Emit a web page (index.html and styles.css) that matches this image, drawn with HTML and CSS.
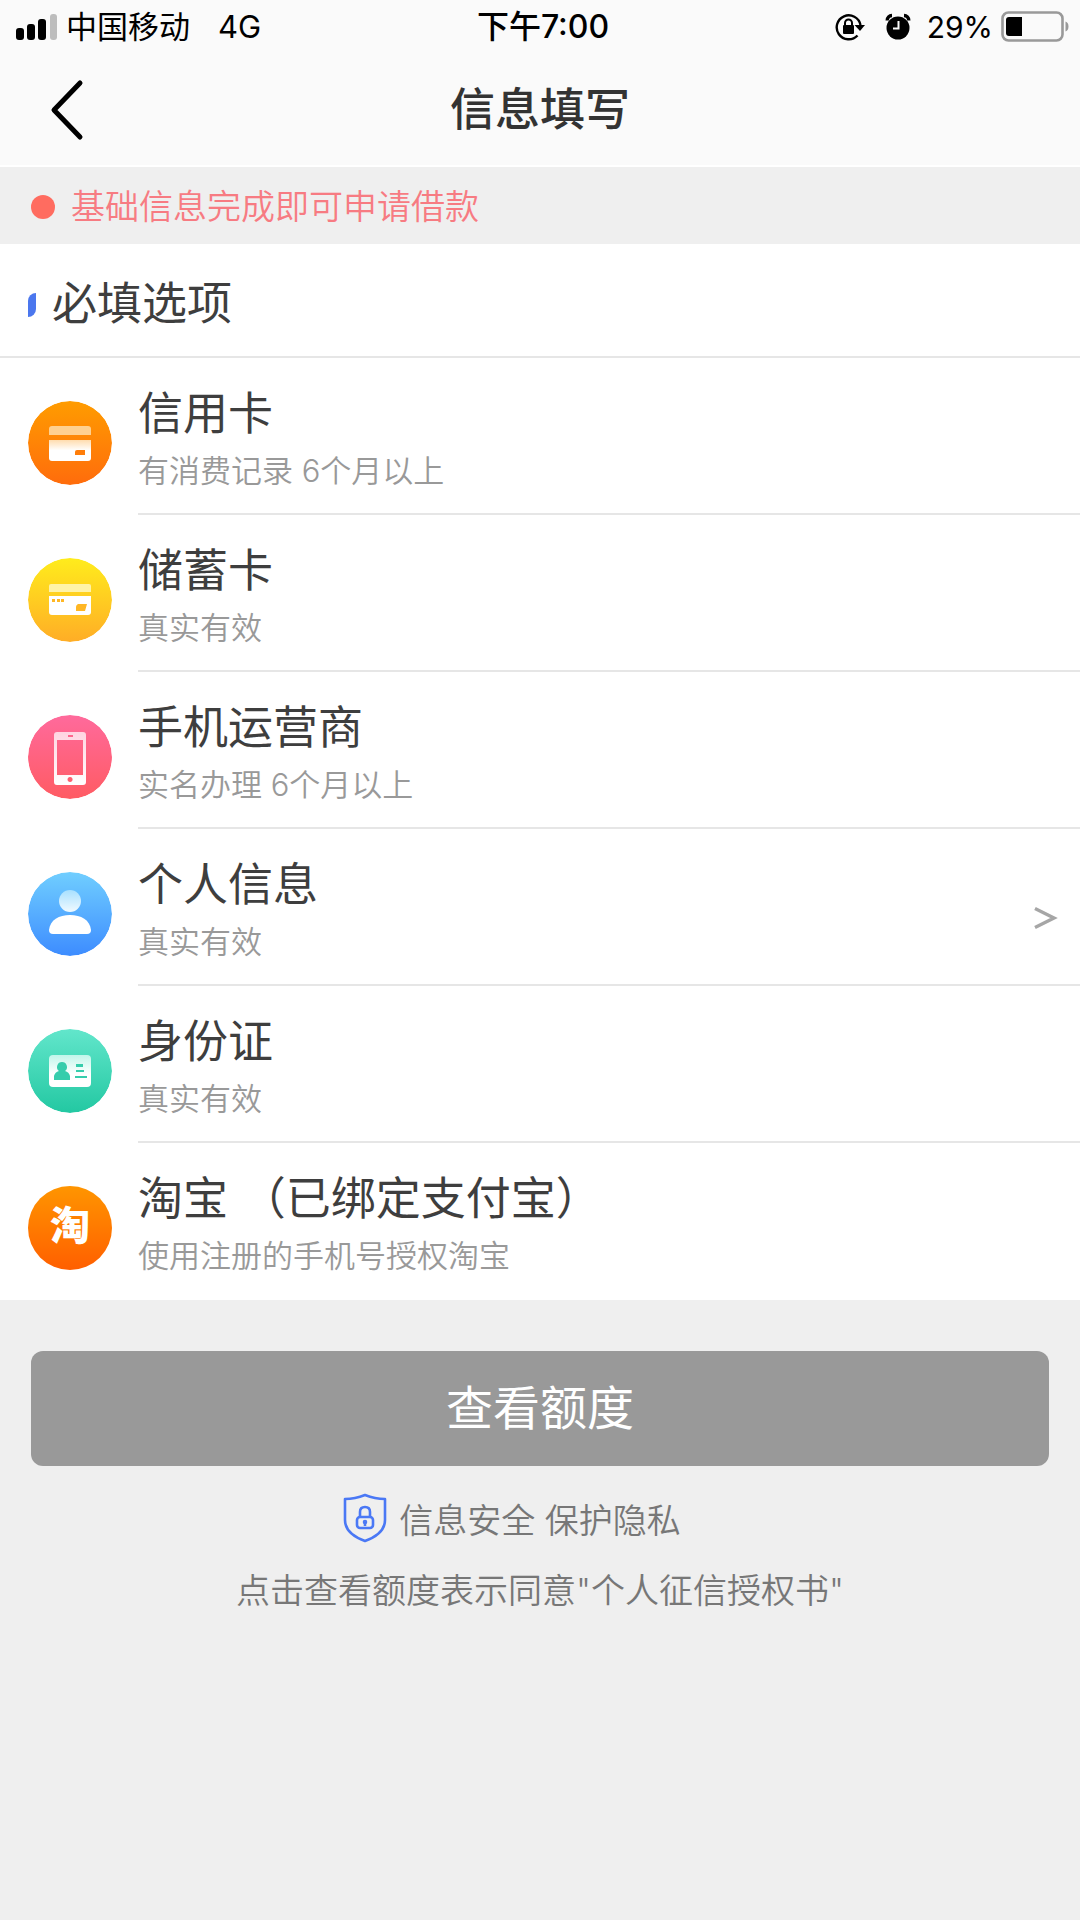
FILE: index.html
```html
<!DOCTYPE html>
<html lang="zh-CN">
<head>
<meta charset="utf-8">
<meta name="viewport" content="width=device-width">
<title>信息填写</title>
<link rel="stylesheet" href="styles.css">
</head>
<body>
<div class="status">
  <div class="status-side">
    <svg class="signal" width="42" height="28" viewBox="0 0 42 28" aria-hidden="true">
      <rect x="0" y="15" width="8" height="12" rx="3"/>
      <rect x="11" y="11" width="8" height="16" rx="3"/>
      <rect x="22" y="6" width="8" height="21" rx="3"/>
      <rect x="34" y="1" width="7" height="26" rx="3" fill="#bdbdbd"/>
    </svg>
    <span class="carrier">中国移动</span>
    <span>4G</span>
  </div>
  <div class="status-time">下午7:00</div>
  <div class="status-side status-right">
    <svg width="30" height="28" viewBox="0 0 30 28" aria-hidden="true">
      <path d="M22.500 22.500A12 12 0 1 1 25.500 12" fill="none" stroke="#000" stroke-width="2.400"/>
      <path d="M19.500 12h10.500l-5 6z"/>
      <rect x="8" y="12" width="11" height="9" rx="1"/>
      <path d="M10 12.500V10a3.500 3.500 0 0 1 7 0v2.500" fill="none" stroke="#000" stroke-width="2"/>
    </svg>
    <svg class="alarm" width="26" height="28" viewBox="0 0 26 28" aria-hidden="true">
      <circle cx="13" cy="15" r="11.500"/>
      <path d="M2.200 7.500A5 5 0 0 1 7 2.500M19 2.500a5 5 0 0 1 4.800 5" fill="none" stroke="#000" stroke-width="3.400"/>
      <path d="M13.500 8v7.500H8" fill="none" stroke="#fafafa" stroke-width="2"/>
    </svg>
    <span class="percent">29%</span>
    <svg width="69" height="32" viewBox="0 0 69 32" aria-hidden="true">
      <rect x="1.500" y="1.500" width="60" height="28" rx="6" fill="none" stroke="#999" stroke-width="2.600"/>
      <path d="M64.500 10.500c4 1 4 9 0 10z" fill="#999"/>
      <path d="M8 6h13v19H8a3 3 0 0 1-3-3V9a3 3 0 0 1 3-3z"/>
    </svg>
  </div>
</div>

<header class="nav">
  <button class="back" type="button" aria-label="返回">
    <svg width="34" height="62" viewBox="0 0 34 62" aria-hidden="true"><path d="M30 4L4 31l26 27" fill="none" stroke="#000" stroke-width="5" stroke-linecap="round" stroke-linejoin="round"/></svg>
  </button>
  <h1 class="nav-title">信息填写</h1>
</header>

<p class="notice"><span class="dot"></span>基础信息完成即可申请借款</p>

<main>
  <section class="panel">
    <h2 class="section-title"><span class="mark"></span>必填选项</h2>
    <ul class="list">
      <li><a class="row" href="#credit">
        <svg class="badge" viewBox="0 0 84 84" aria-hidden="true">
          <defs>
            <linearGradient id="g1" x2="0" y2="1"><stop stop-color="#ff9c00"/><stop offset="1" stop-color="#ff6c0c"/></linearGradient>
            <linearGradient id="c1" x2="0" y2="1"><stop stop-color="#ffdcae"/><stop offset=".5" stop-color="#fff"/></linearGradient>
          </defs>
          <circle cx="42" cy="42" r="42" fill="url(#g1)"/>
          <path d="M24 25h36q3 0 3 3v6H21v-6q0-3 3-3z" fill="#ffd08f"/>
          <path d="M21 39h42v18q0 3-3 3H24q-3 0-3-3z" fill="url(#c1)"/>
          <path d="M49 49h8v5h-10v-3q0-2 2-2z" fill="#ff7d08"/>
        </svg>
        <span class="text"><span class="name">信用卡</span><span class="desc">有消费记录 6个月以上</span></span>
      </a></li>
      <li><a class="row" href="#debit">
        <svg class="badge" viewBox="0 0 84 84" aria-hidden="true">
          <defs><linearGradient id="g2" x2="0" y2="1"><stop stop-color="#ffec1c"/><stop offset="1" stop-color="#ffad26"/></linearGradient></defs>
          <circle cx="42" cy="42" r="42" fill="url(#g2)"/>
          <path d="M23 26h38q2 0 2 2v6H21v-6q0-2 2-2z" fill="#fff3a8"/>
          <path d="M21 38h42v16q0 3-3 3H24q-3 0-3-3z" fill="#fff"/>
          <path d="M24 41h3v3h-3zm5 0h3v3h-3zm4 0h3v3h-3zM50 46h9l-2 7h-9v-4q0-2 2-3z" fill="#ffb724"/>
        </svg>
        <span class="text"><span class="name">储蓄卡</span><span class="desc">真实有效</span></span>
      </a></li>
      <li><a class="row" href="#carrier">
        <svg class="badge" viewBox="0 0 84 84" aria-hidden="true">
          <defs>
            <linearGradient id="g3" x2="0" y2="1"><stop stop-color="#ff6a9c"/><stop offset="1" stop-color="#ff5b63"/></linearGradient>
            <linearGradient id="c3" x2="0" y2="1"><stop stop-color="#ffd4e1"/><stop offset="1" stop-color="#fff"/></linearGradient>
          </defs>
          <circle cx="42" cy="42" r="42" fill="url(#g3)"/>
          <path fill-rule="evenodd" d="M29 17h26q3 0 3 3v47q0 3-3 3H29q-3 0-3-3V20q0-3 3-3zM29 25v35h26V25zM40 20v2h5v-2zM42 62a2.500 2.500 0 1 0 .1 0z" fill="url(#c3)"/>
        </svg>
        <span class="text"><span class="name">手机运营商</span><span class="desc">实名办理 6个月以上</span></span>
      </a></li>
      <li><a class="row" href="#profile">
        <svg class="badge" viewBox="0 0 84 84" aria-hidden="true">
          <defs>
            <linearGradient id="g4" x2="0" y2="1"><stop stop-color="#70ceff"/><stop offset="1" stop-color="#3d8cff"/></linearGradient>
            <linearGradient id="c4" x2="0" y2="1"><stop stop-color="#a8e0ff"/><stop offset="1" stop-color="#f0faff"/></linearGradient>
          </defs>
          <circle cx="42" cy="42" r="42" fill="url(#g4)"/>
          <circle cx="42" cy="29" r="11" fill="url(#c4)"/>
          <path d="M21 58c1-10 10-15 21-15s20 5 21 15q0 4-4 4H25q-4 0-4-4z" fill="#fff"/>
        </svg>
        <span class="text"><span class="name">个人信息</span><span class="desc">真实有效</span></span>
        <svg class="more" width="24" height="26" viewBox="0 0 24 26" aria-hidden="true"><path d="M1 3.500L20 13 1 22.500" fill="none" stroke="#a6a6a6" stroke-width="3.400"/></svg>
      </a></li>
      <li><a class="row" href="#idcard">
        <svg class="badge" viewBox="0 0 84 84" aria-hidden="true">
          <defs>
            <linearGradient id="g5" x2="0" y2="1"><stop stop-color="#62e6cb"/><stop offset="1" stop-color="#23c8a2"/></linearGradient>
            <linearGradient id="c5" x2="0" y2="1"><stop stop-color="#c0f6ea"/><stop offset=".6" stop-color="#fff"/></linearGradient>
          </defs>
          <circle cx="42" cy="42" r="42" fill="url(#g5)"/>
          <rect x="21" y="26" width="42" height="32" rx="4" fill="url(#c5)"/>
          <path d="M34 33a5 5 0 0 1 3 9q4 1 5 5v4H26v-4q1-4 5-5a5 5 0 0 1 3-9zM48 35h7v3h-7zm0 6h8v2h-8zm-1 6h12v2H47z" fill="#36cdac"/>
        </svg>
        <span class="text"><span class="name">身份证</span><span class="desc">真实有效</span></span>
      </a></li>
      <li><a class="row" href="#taobao">
        <span class="badge badge-taobao" aria-hidden="true">淘</span>
        <span class="text"><span class="name">淘宝 （已绑定支付宝）</span><span class="desc">使用注册的手机号授权淘宝</span></span>
      </a></li>
    </ul>
  </section>

  <section class="actions">
    <button class="submit" type="button">查看额度</button>
    <div class="secure">
      <svg class="shield" width="44" height="50" viewBox="0 0 44 50" fill="none" stroke="#4a78f5" stroke-width="2.600" stroke-linejoin="round" aria-hidden="true">
        <path d="M22 2Q32 6 42 6v21c0 10-9 17-20 21C11 44 2 37 2 27V6q10 0 20-4z"/>
        <rect x="14" y="24" width="16" height="11" rx="3"/>
        <path d="M17 24v-5q0-5 5-5t5 5v5M22 29v4"/>
        <circle cx="22" cy="29" r="1"/>
      </svg>
      <span>信息安全 保护隐私</span>
    </div>
    <p class="terms">点击查看额度表示同意"个人征信授权书"</p>
  </section>
</main>
</body>
</html>
```
FILE: styles.css
```css
* { box-sizing: border-box; }

body {
  margin: 0;
  min-height: 100vh;
  background: #efefef;
  color: #3e3e3e;
  font-family: Inter, "Noto Sans CJK SC", sans-serif;
}

h1, h2, p, ul { margin: 0; padding: 0; font-weight: 400; }
ul { list-style: none; }
a { color: inherit; text-decoration: none; }
svg { display: block; flex: none; }
button { border: 0; padding: 0; font-family: inherit; cursor: pointer; }

.status {
  display: grid;
  grid-template-columns: 1fr auto 1fr;
  align-items: center;
  height: 54px;
  padding: 0 10px 0 16px;
  background: #fafafa;
  color: #000;
  font-size: 31px;
  line-height: 54px;
}
.status-side { display: flex; align-items: center; }
.status-right { justify-content: flex-end; }
.signal { margin-right: 8px; }
.carrier { margin-right: 28px; }
.status-time { font-size: 32px; font-weight: 500; }
.alarm { margin: 0 16px 0 20px; }
.percent { margin-right: 8px; font-size: 30px; }

.nav {
  display: grid;
  grid-template-columns: 120px 1fr 120px;
  align-items: center;
  height: 113px;
  background: #fafafa;
  border-bottom: 2px solid #fff;
}
.back {
  display: flex;
  justify-content: center;
  padding-left: 14px;
  background: none;
}
.nav-title {
  text-align: center;
  color: #333;
  font-size: 45px;
  font-weight: 500;
  line-height: 64px;
}

.notice {
  display: flex;
  align-items: center;
  height: 77px;
  padding: 0 0 2px 31px;
  color: #f77b82;
  font-size: 34px;
  font-weight: 350;
}
.dot {
  width: 24px;
  height: 24px;
  margin: 4px 16px 0 0;
  border-radius: 50%;
  background: #ff6c60;
}

.panel { background: #fff; }
.section-title {
  display: flex;
  align-items: center;
  height: 114px;
  padding-left: 28px;
  border-bottom: 2px solid #e6e6e6;
  font-size: 45px;
}
.mark {
  width: 8px;
  height: 24px;
  margin: 10px 16px 0 0;
  border-radius: 8px 0 8px 0;
  background: #4b77ee;
}

.row {
  position: relative;
  display: flex;
  align-items: center;
  height: 157px;
  padding-left: 28px;
}
.badge {
  flex: none;
  width: 84px;
  height: 84px;
  margin: 12px 26px 0 0;
  border-radius: 50%;
}
.badge-taobao {
  background: linear-gradient(#ff9500, #ff5f00);
  color: #fff;
  font-size: 40px;
  font-weight: 900;
  line-height: 80px;
  text-align: center;
}
.text {
  flex: 1;
  align-self: stretch;
  padding-top: 28px;
  border-bottom: 2px solid #e6e6e6;
}
li:last-child .text { border-bottom: 0; }
.name, .desc { display: block; }
.name { font-size: 45px; line-height: 56px; }
.desc {
  color: #999;
  font-size: 31px;
  font-weight: 350;
  line-height: 58px;
}
.more {
  position: absolute;
  right: 22px;
  top: 76px;
}

.actions { padding: 51px 31px 0; }
.submit {
  display: block;
  width: 100%;
  height: 115px;
  padding-bottom: 8px;
  border-radius: 12px;
  background: #999;
  color: #fff;
  font-size: 47px;
}
.secure {
  display: grid;
  grid-template-columns: 1fr auto 1fr;
  align-items: center;
  column-gap: 12px;
  height: 104px;
  color: #777;
  font-size: 34px;
  font-weight: 350;
}
.shield { justify-self: end; }
.terms {
  color: #777;
  font-size: 34px;
  font-weight: 350;
  line-height: 42px;
  text-align: center;
}
```
